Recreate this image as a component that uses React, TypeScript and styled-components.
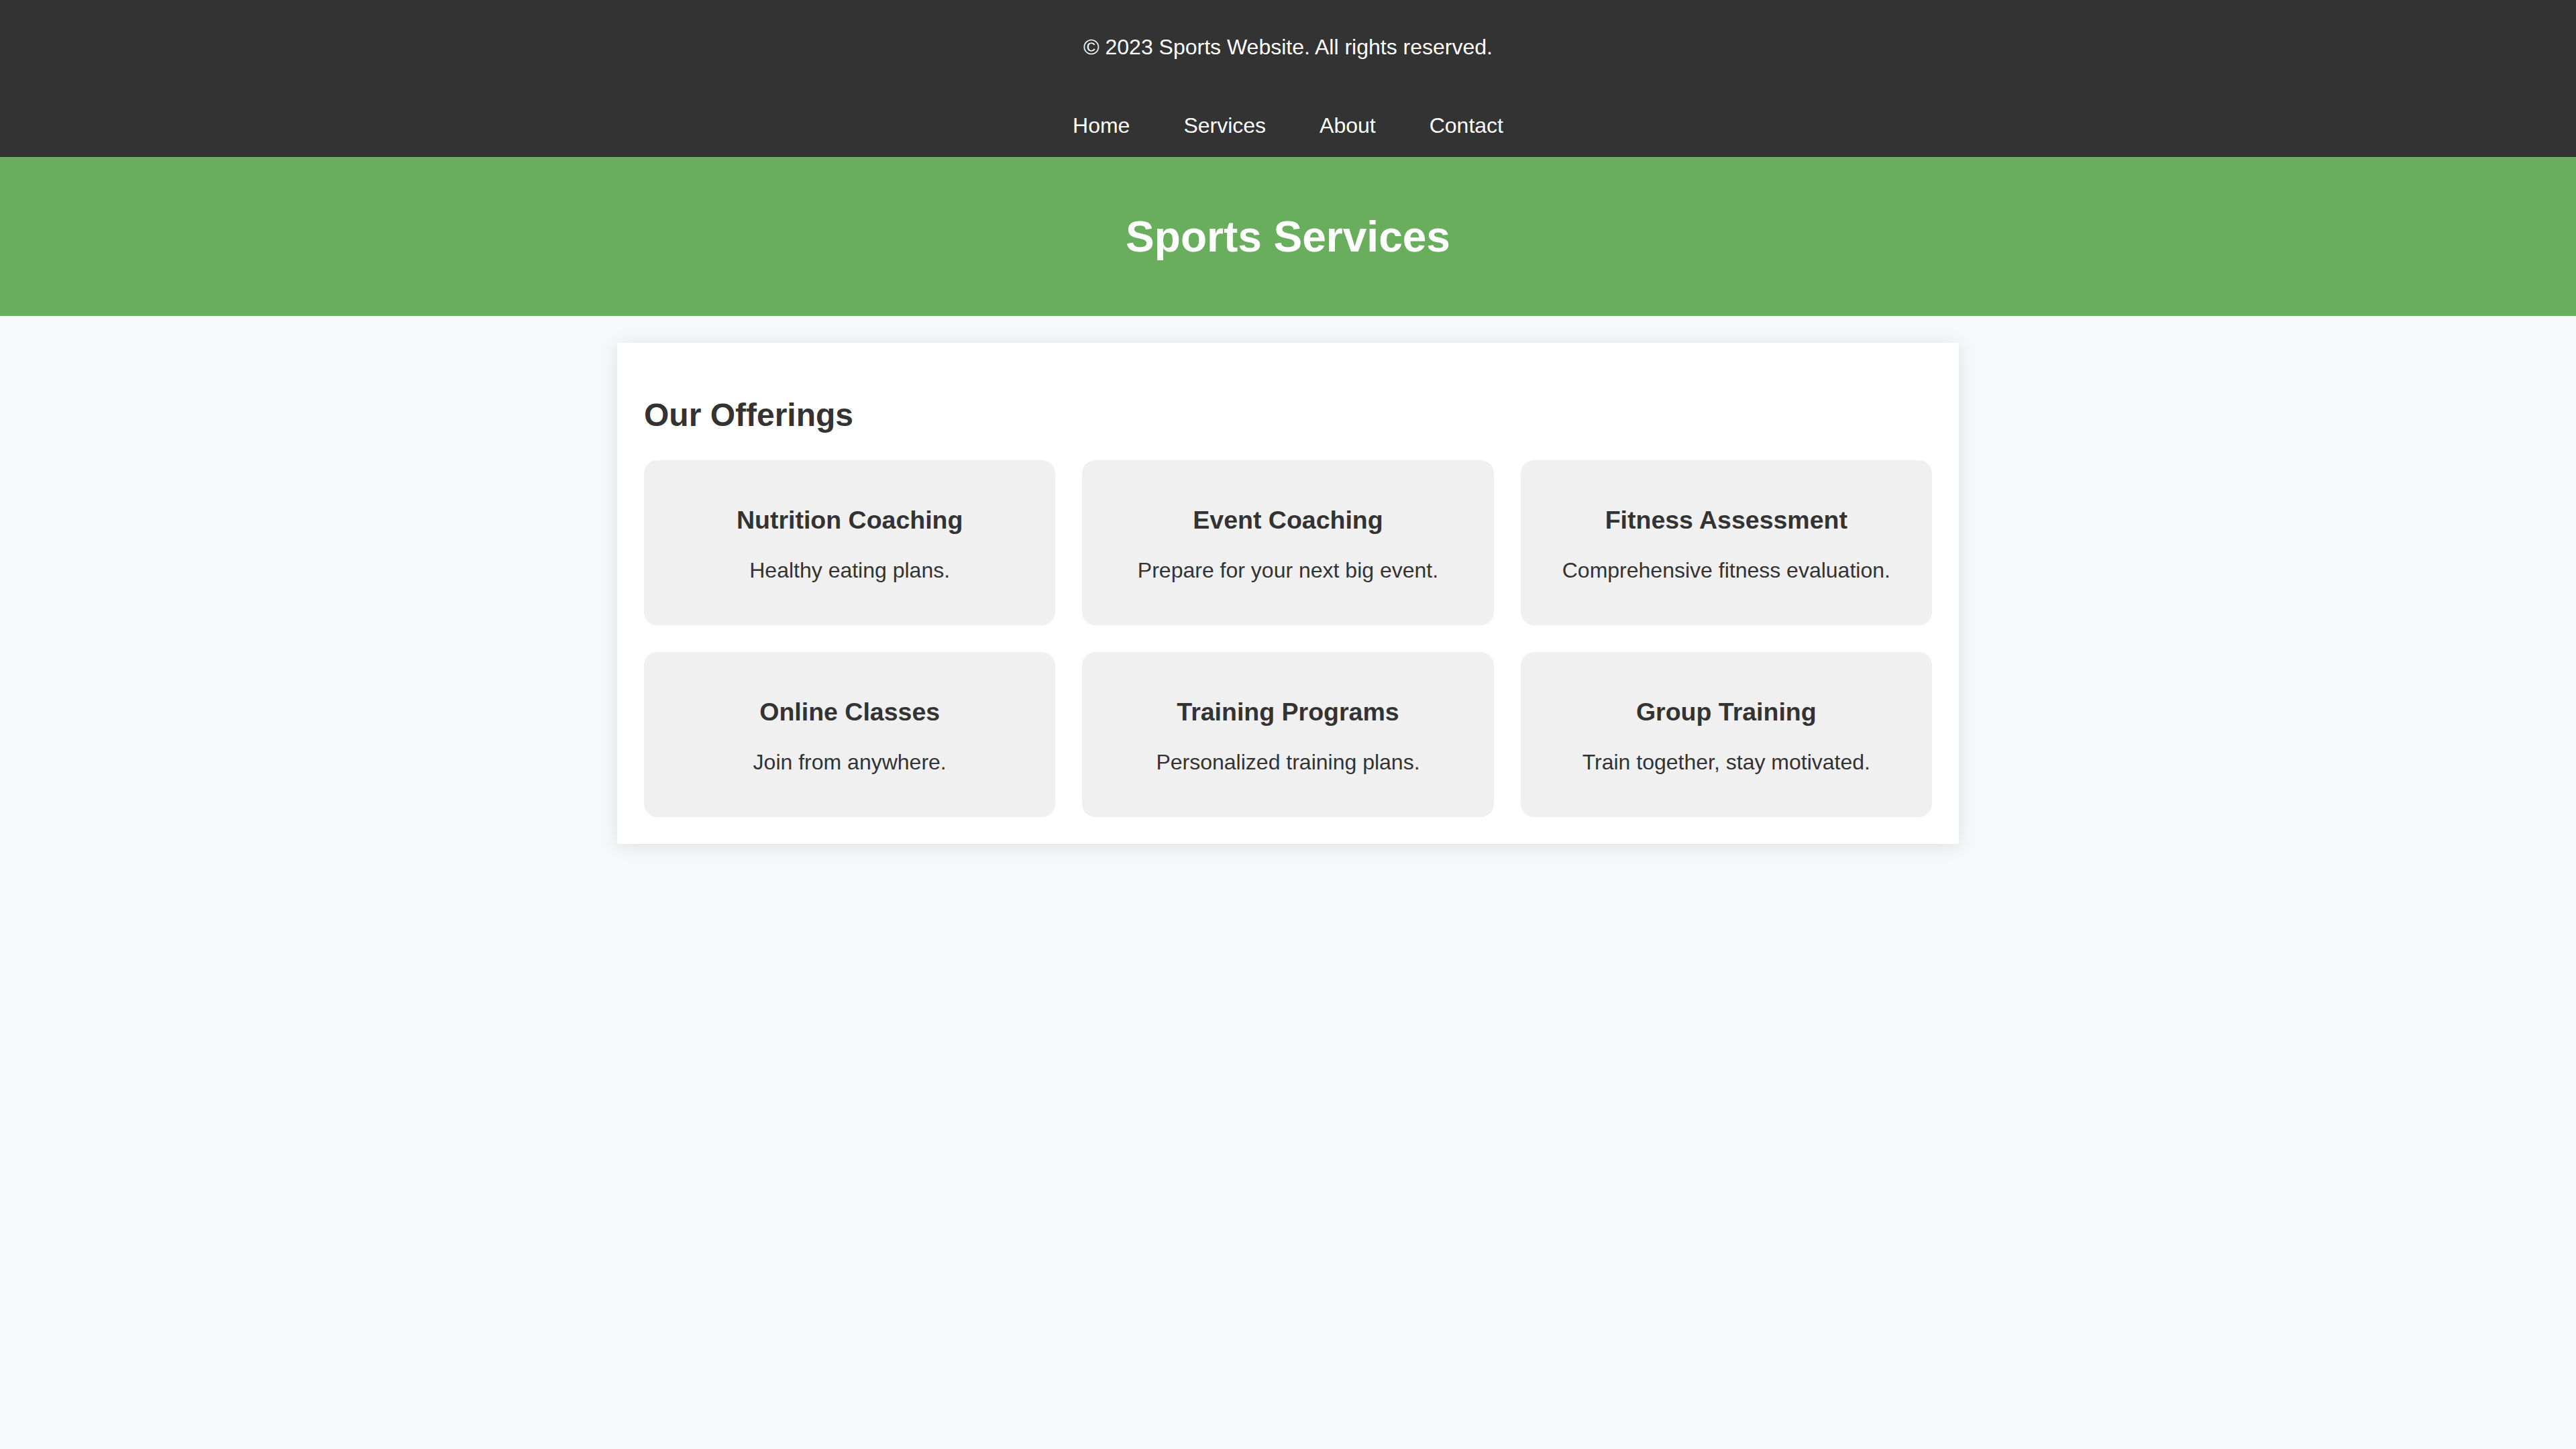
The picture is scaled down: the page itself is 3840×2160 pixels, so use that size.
import React from 'react';
import styled, { createGlobalStyle } from 'styled-components';

const GlobalStyle = createGlobalStyle`
  html, body {
    margin: 0;
    padding: 0;
    background: #f7f8fa;
    font-family: 'Liberation Sans', Arial, sans-serif;
    color: #333;
  }
  #root {
    min-height: 100vh;
  }
`;

export const TopBar = styled.header`
  background: #333;
  color: #fff;
  padding: 52px 0 28px;
  display: flex;
  flex-direction: column;
  align-items: center;
`;

export const Copyright = styled.p`
  margin: 0 0 80px;
  font-size: 32px;
  line-height: 37px;
`;

export const Nav = styled.nav`
  display: flex;
  justify-content: center;
  gap: 80px;
`;

export const NavLink = styled.a`
  color: #fff;
  text-decoration: none;
  font-size: 32px;
  line-height: 37px;
  cursor: pointer;
`;

export const Hero = styled.section`
  background: #69ae5d;
  height: 237px;
  display: flex;
  align-items: center;
  justify-content: center;
`;

export const HeroTitle = styled.h1`
  margin: 0;
  color: #fff;
  font-size: 64px;
  line-height: 74px;
  font-weight: 700;
`;

export const Panel = styled.main`
  width: 2000px;
  box-sizing: border-box;
  margin: 40px auto 0;
  padding: 0 40px 40px;
  background: #fff;
  box-shadow: 0 3px 25px rgba(0, 0, 0, 0.1);
  display: flow-root;
`;

export const PanelTitle = styled.h2`
  margin: 80px 0 40px;
  font-size: 48px;
  line-height: 55px;
  font-weight: 700;
  color: #333;
`;

export const Grid = styled.div`
  display: grid;
  grid-template-columns: repeat(3, 1fr);
  gap: 40px;
`;

export const Card = styled.div`
  background: #f0f0f0;
  border-radius: 20px;
  padding: 68px 20px 63px;
  text-align: center;
`;

export const CardTitle = styled.h3`
  margin: 0 0 35px;
  font-size: 37.5px;
  line-height: 43px;
  font-weight: 700;
  color: #333;
`;

export const CardText = styled.p`
  margin: 0;
  font-size: 32px;
  line-height: 37px;
  color: #333;
`;

const offerings = [
  { title: 'Nutrition Coaching', text: 'Healthy eating plans.' },
  { title: 'Event Coaching', text: 'Prepare for your next big event.' },
  { title: 'Fitness Assessment', text: 'Comprehensive fitness evaluation.' },
  { title: 'Online Classes', text: 'Join from anywhere.' },
  { title: 'Training Programs', text: 'Personalized training plans.' },
  { title: 'Group Training', text: 'Train together, stay motivated.' },
];

const links = ['Home', 'Services', 'About', 'Contact'];

export default function App() {
  return (
    <>
      <GlobalStyle />
      <TopBar>
        <Copyright>© 2023 Sports Website. All rights reserved.</Copyright>
        <Nav>
          {links.map(l => (
            <NavLink key={l}>{l}</NavLink>
          ))}
        </Nav>
      </TopBar>
      <Hero>
        <HeroTitle>Sports Services</HeroTitle>
      </Hero>
      <Panel>
        <PanelTitle>Our Offerings</PanelTitle>
        <Grid>
          {offerings.map(o => (
            <Card key={o.title}>
              <CardTitle>{o.title}</CardTitle>
              <CardText>{o.text}</CardText>
            </Card>
          ))}
        </Grid>
      </Panel>
    </>
  );
}
